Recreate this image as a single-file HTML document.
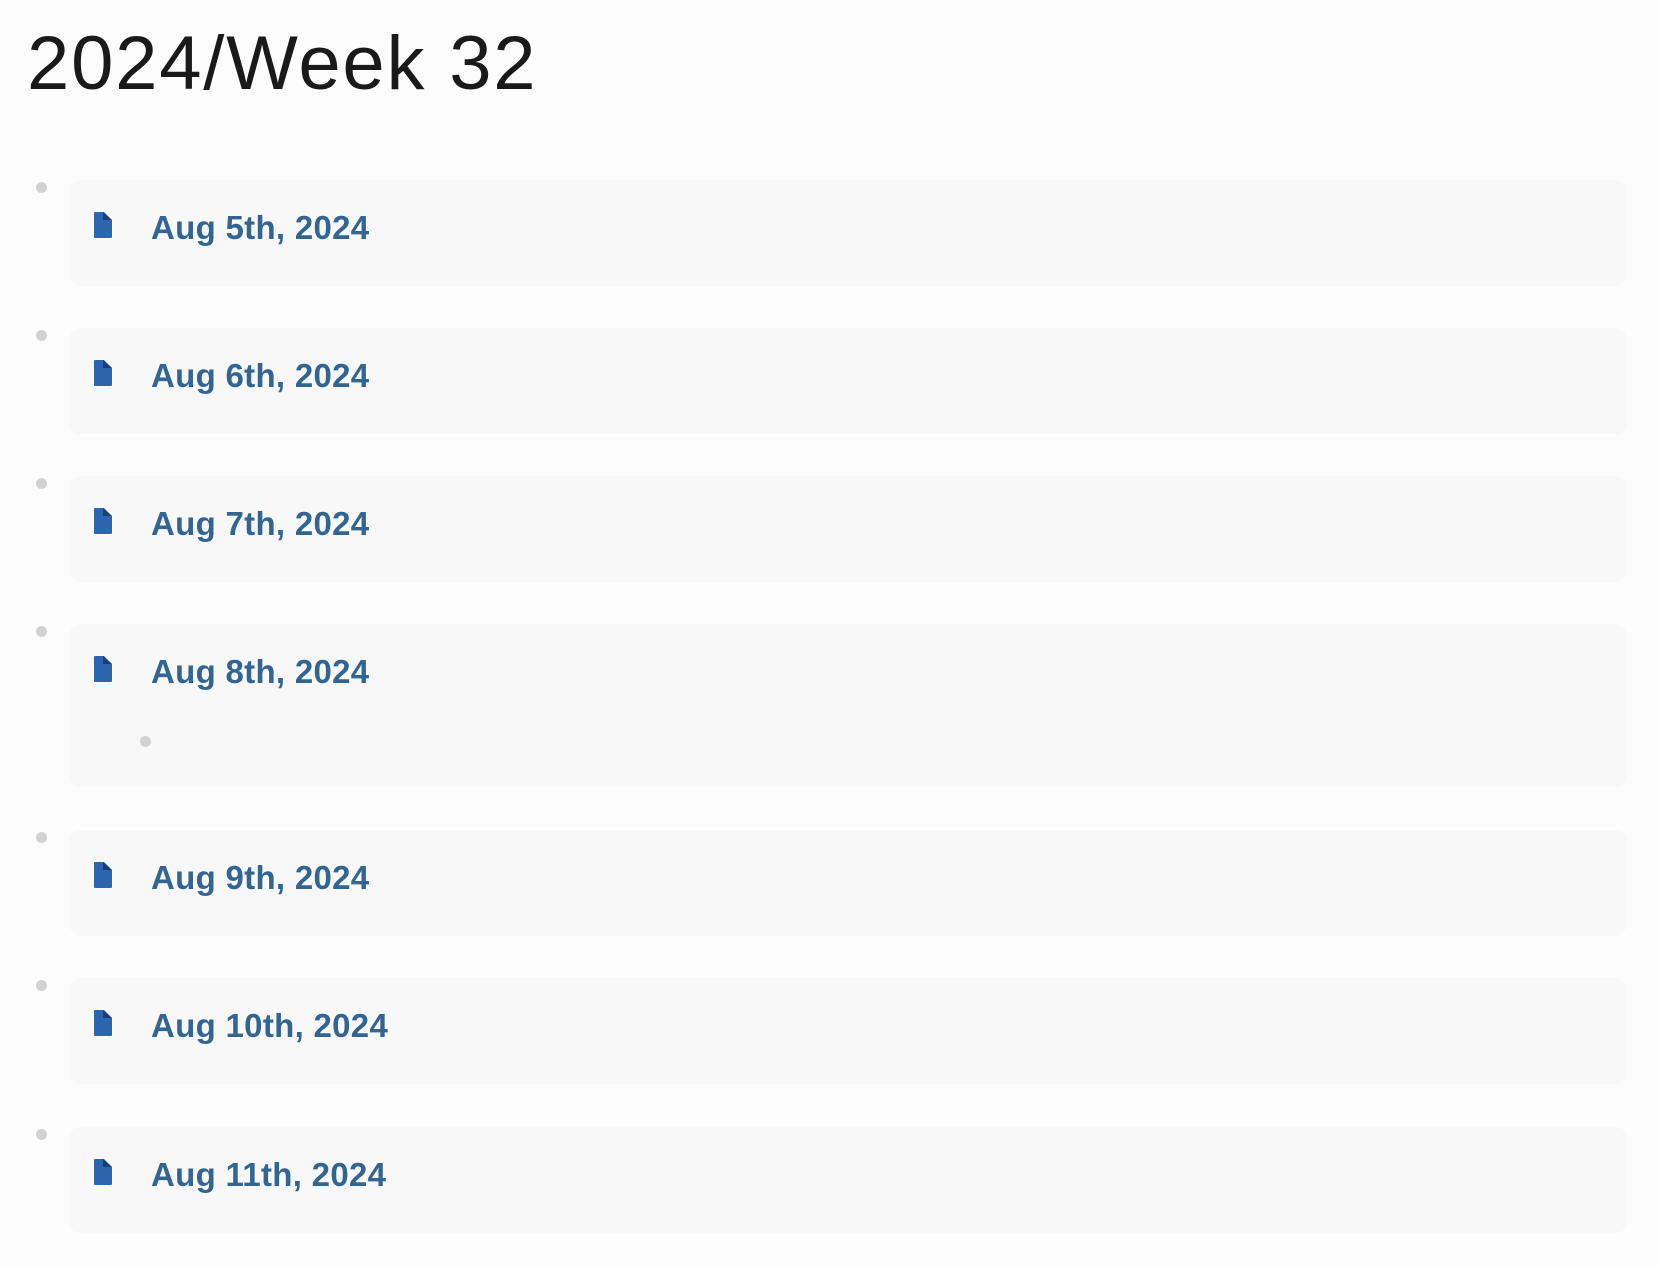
<!DOCTYPE html>
<html><head><meta charset="utf-8"><style>
body{margin:0;background:#fcfcfc;width:1660px;height:1268px;overflow:hidden;font-family:"Liberation Sans",sans-serif;}
h1{position:absolute;left:27px;top:14px;margin:0;font-size:76px;font-weight:400;color:#1a1a1a;line-height:100px;letter-spacing:1.8px;}
.b{position:absolute;width:11px;height:11px;border-radius:50%;background:#d2d2d2;}
.c{position:absolute;left:70px;width:1556px;background:#f8f8f8;border-radius:10px;}
.t{position:absolute;left:81px;top:26px;font-size:33px;font-weight:700;color:#336592;letter-spacing:0.3px;line-height:44px;}
.i{position:absolute;left:24px;top:32px;width:18px;height:26px;}
</style></head><body>
<h1>2024/Week 32</h1>
<div class="b" style="left:36px;top:182px"></div>
<div class="c" style="top:180px;height:106px"><svg class="i" viewBox="0 0 18 26"><path d="M1 0H10L18 8V25a1 1 0 0 1-1 1H1a1 1 0 0 1-1-1V1a1 1 0 0 1 1-1z" fill="#2c64b0"/><path d="M9 0L18 8H9z" fill="#1c3f72"/></svg><div class="t">Aug 5th, 2024</div></div>
<div class="b" style="left:36px;top:330px"></div>
<div class="c" style="top:328px;height:106px"><svg class="i" viewBox="0 0 18 26"><path d="M1 0H10L18 8V25a1 1 0 0 1-1 1H1a1 1 0 0 1-1-1V1a1 1 0 0 1 1-1z" fill="#2c64b0"/><path d="M9 0L18 8H9z" fill="#1c3f72"/></svg><div class="t">Aug 6th, 2024</div></div>
<div class="b" style="left:36px;top:478px"></div>
<div class="c" style="top:476px;height:106px"><svg class="i" viewBox="0 0 18 26"><path d="M1 0H10L18 8V25a1 1 0 0 1-1 1H1a1 1 0 0 1-1-1V1a1 1 0 0 1 1-1z" fill="#2c64b0"/><path d="M9 0L18 8H9z" fill="#1c3f72"/></svg><div class="t">Aug 7th, 2024</div></div>
<div class="b" style="left:36px;top:626px"></div>
<div class="c" style="top:624px;height:163px"><svg class="i" viewBox="0 0 18 26"><path d="M1 0H10L18 8V25a1 1 0 0 1-1 1H1a1 1 0 0 1-1-1V1a1 1 0 0 1 1-1z" fill="#2c64b0"/><path d="M9 0L18 8H9z" fill="#1c3f72"/></svg><div class="t">Aug 8th, 2024</div><div class="b" style="left:70px;top:112px"></div></div>
<div class="b" style="left:36px;top:832px"></div>
<div class="c" style="top:830px;height:106px"><svg class="i" viewBox="0 0 18 26"><path d="M1 0H10L18 8V25a1 1 0 0 1-1 1H1a1 1 0 0 1-1-1V1a1 1 0 0 1 1-1z" fill="#2c64b0"/><path d="M9 0L18 8H9z" fill="#1c3f72"/></svg><div class="t">Aug 9th, 2024</div></div>
<div class="b" style="left:36px;top:980px"></div>
<div class="c" style="top:978px;height:106px"><svg class="i" viewBox="0 0 18 26"><path d="M1 0H10L18 8V25a1 1 0 0 1-1 1H1a1 1 0 0 1-1-1V1a1 1 0 0 1 1-1z" fill="#2c64b0"/><path d="M9 0L18 8H9z" fill="#1c3f72"/></svg><div class="t">Aug 10th, 2024</div></div>
<div class="b" style="left:36px;top:1129px"></div>
<div class="c" style="top:1127px;height:106px"><svg class="i" viewBox="0 0 18 26"><path d="M1 0H10L18 8V25a1 1 0 0 1-1 1H1a1 1 0 0 1-1-1V1a1 1 0 0 1 1-1z" fill="#2c64b0"/><path d="M9 0L18 8H9z" fill="#1c3f72"/></svg><div class="t">Aug 11th, 2024</div></div>
</body></html>
